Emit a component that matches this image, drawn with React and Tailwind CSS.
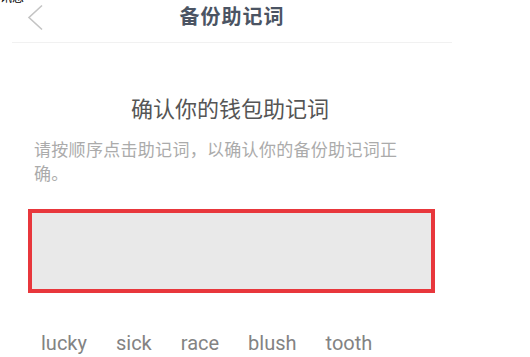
import React from 'react';

const words = ['lucky', 'sick', 'race', 'blush', 'tooth'];

const App = () => {
    return (
        <div className="w-[530px] h-[357px] bg-white overflow-hidden relative" style={{ fontFamily: 'Roboto, "Noto Sans CJK SC", sans-serif' }}>
            {/* cut-off text at the very top */}
            <div className="absolute left-0 top-0 h-[4px] w-[40px] overflow-hidden">
                <div className="text-[12px] leading-[12px] text-black -mt-[8px]">讯息 一</div>
            </div>

            <div className="w-[464px]">
                <div className="relative h-[43px] mx-[12px] flex items-center justify-center border-b border-[#f1f1f1]">
                    <svg className="absolute left-[15px] top-[4px]" width="17" height="27" viewBox="0 0 17 27" fill="none">
                        <path d="M15 1.5 L2 13.5 L15 25.5" stroke="#c4c4c4" strokeWidth="1.6" />
                    </svg>
                    <h1 className="text-[20px] font-bold text-[#4b5463] -mt-[8px] tracking-[1px]">备份助记词</h1>
                </div>

                <div className="pt-[52px] flex justify-center">
                    <h2 className="text-[22px] text-[#555] leading-[30px] ml-[-4px]">确认你的钱包助记词</h2>
                </div>

                <p className="ml-[34px] mt-[13px] w-[380px] text-[17px] leading-[24px] tracking-[0.3px] text-[#ababab]">
                    请按顺序点击助记词，以确认你的备份助记词正确。
                </p>

                <div className="ml-[28px] mt-[23px] w-[407px] h-[84px] border-[4px] border-[#e8373c] bg-[#e9e9e9]"></div>

                <div className="ml-[41px] mt-[39px] flex gap-[29px] text-[20px] leading-[22px] text-[#838383]">
                    {words.map((w) => (
                        <span key={w}>{w}</span>
                    ))}
                </div>
            </div>
        </div>
    );
};

export default App;
